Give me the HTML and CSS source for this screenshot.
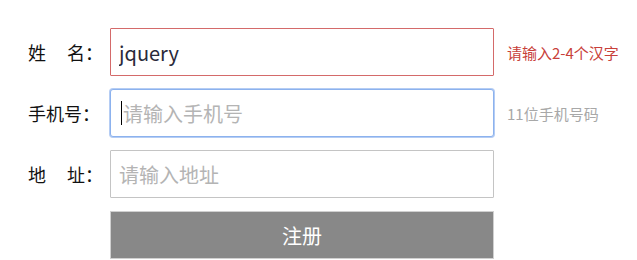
FILE: index.html
```html
<!DOCTYPE html>
<html lang="zh-CN">
<head>
  <meta charset="UTF-8">
  <title>注册</title>
  <link rel="stylesheet" href="styles.css">
</head>
<body>
  <form class="reg-form">
    <div class="form-row">
      <label class="form-label" for="username">姓<span class="sp"></span>名：</label>
      <input class="form-input error" id="username" type="text" value="jquery">
      <span class="tip error">请输入2-4个汉字</span>
    </div>

    <div class="form-row">
      <label class="form-label" for="phone">手机号：</label>
      <div class="input-wrap">
        <input class="form-input active" id="phone" type="text" placeholder="请输入手机号">
        <span class="caret"></span>
      </div>
      <span class="tip">11位手机号码</span>
    </div>

    <div class="form-row">
      <label class="form-label" for="address">地<span class="sp"></span>址：</label>
      <input class="form-input" id="address" type="text" placeholder="请输入地址">
    </div>

    <div class="form-row">
      <span class="form-label"></span>
      <button class="submit-btn" type="button">注册</button>
    </div>
  </form>
</body>
</html>
```

FILE: styles.css
```css
* {
  margin: 0;
  padding: 0;
  box-sizing: border-box;
}

body {
  font-family: "Noto Sans CJK SC", "Noto Sans", sans-serif;
  background: #fff;
  color: #222;
}

.reg-form {
  padding: 28px 0 0 28px;
}

.form-row {
  display: flex;
  align-items: center;
  margin-bottom: 13px;
}

.form-label {
  width: 82px;
  font-size: 18px;
  color: #111;
  white-space: nowrap;
}

.form-label .sp {
  display: inline-block;
  width: 21px;
}

.input-wrap {
  position: relative;
}

.form-input {
  display: block;
  width: 384px;
  height: 48px;
  padding: 0 10px 0 8px;
  border: 1px solid #c4c4c4;
  border-radius: 1px;
  font-family: inherit;
  font-size: 20px;
  color: #2a2a3a;
  outline: none;
  background: #fff;
}

.form-input::placeholder {
  color: #b4b4b4;
}

.form-input.error {
  border-color: #d46a6a;
}

.form-input.active {
  border-color: #8cb2ee;
  border-radius: 3px;
  box-shadow: 0 0 0 1px #b5cdf4;
  padding-left: 12px;
}

.caret {
  position: absolute;
  left: 11px;
  top: 12px;
  width: 1px;
  height: 24px;
  background: #000;
}

.tip {
  margin-left: 13px;
  font-size: 15px;
  color: #a8a8a8;
}

.tip.error {
  color: #c8403a;
}

.submit-btn {
  width: 384px;
  height: 48px;
  border: 1px solid #d0d0d0;
  background: #888;
  color: #fff;
  font-family: inherit;
  font-size: 20px;
  cursor: pointer;
}
```
